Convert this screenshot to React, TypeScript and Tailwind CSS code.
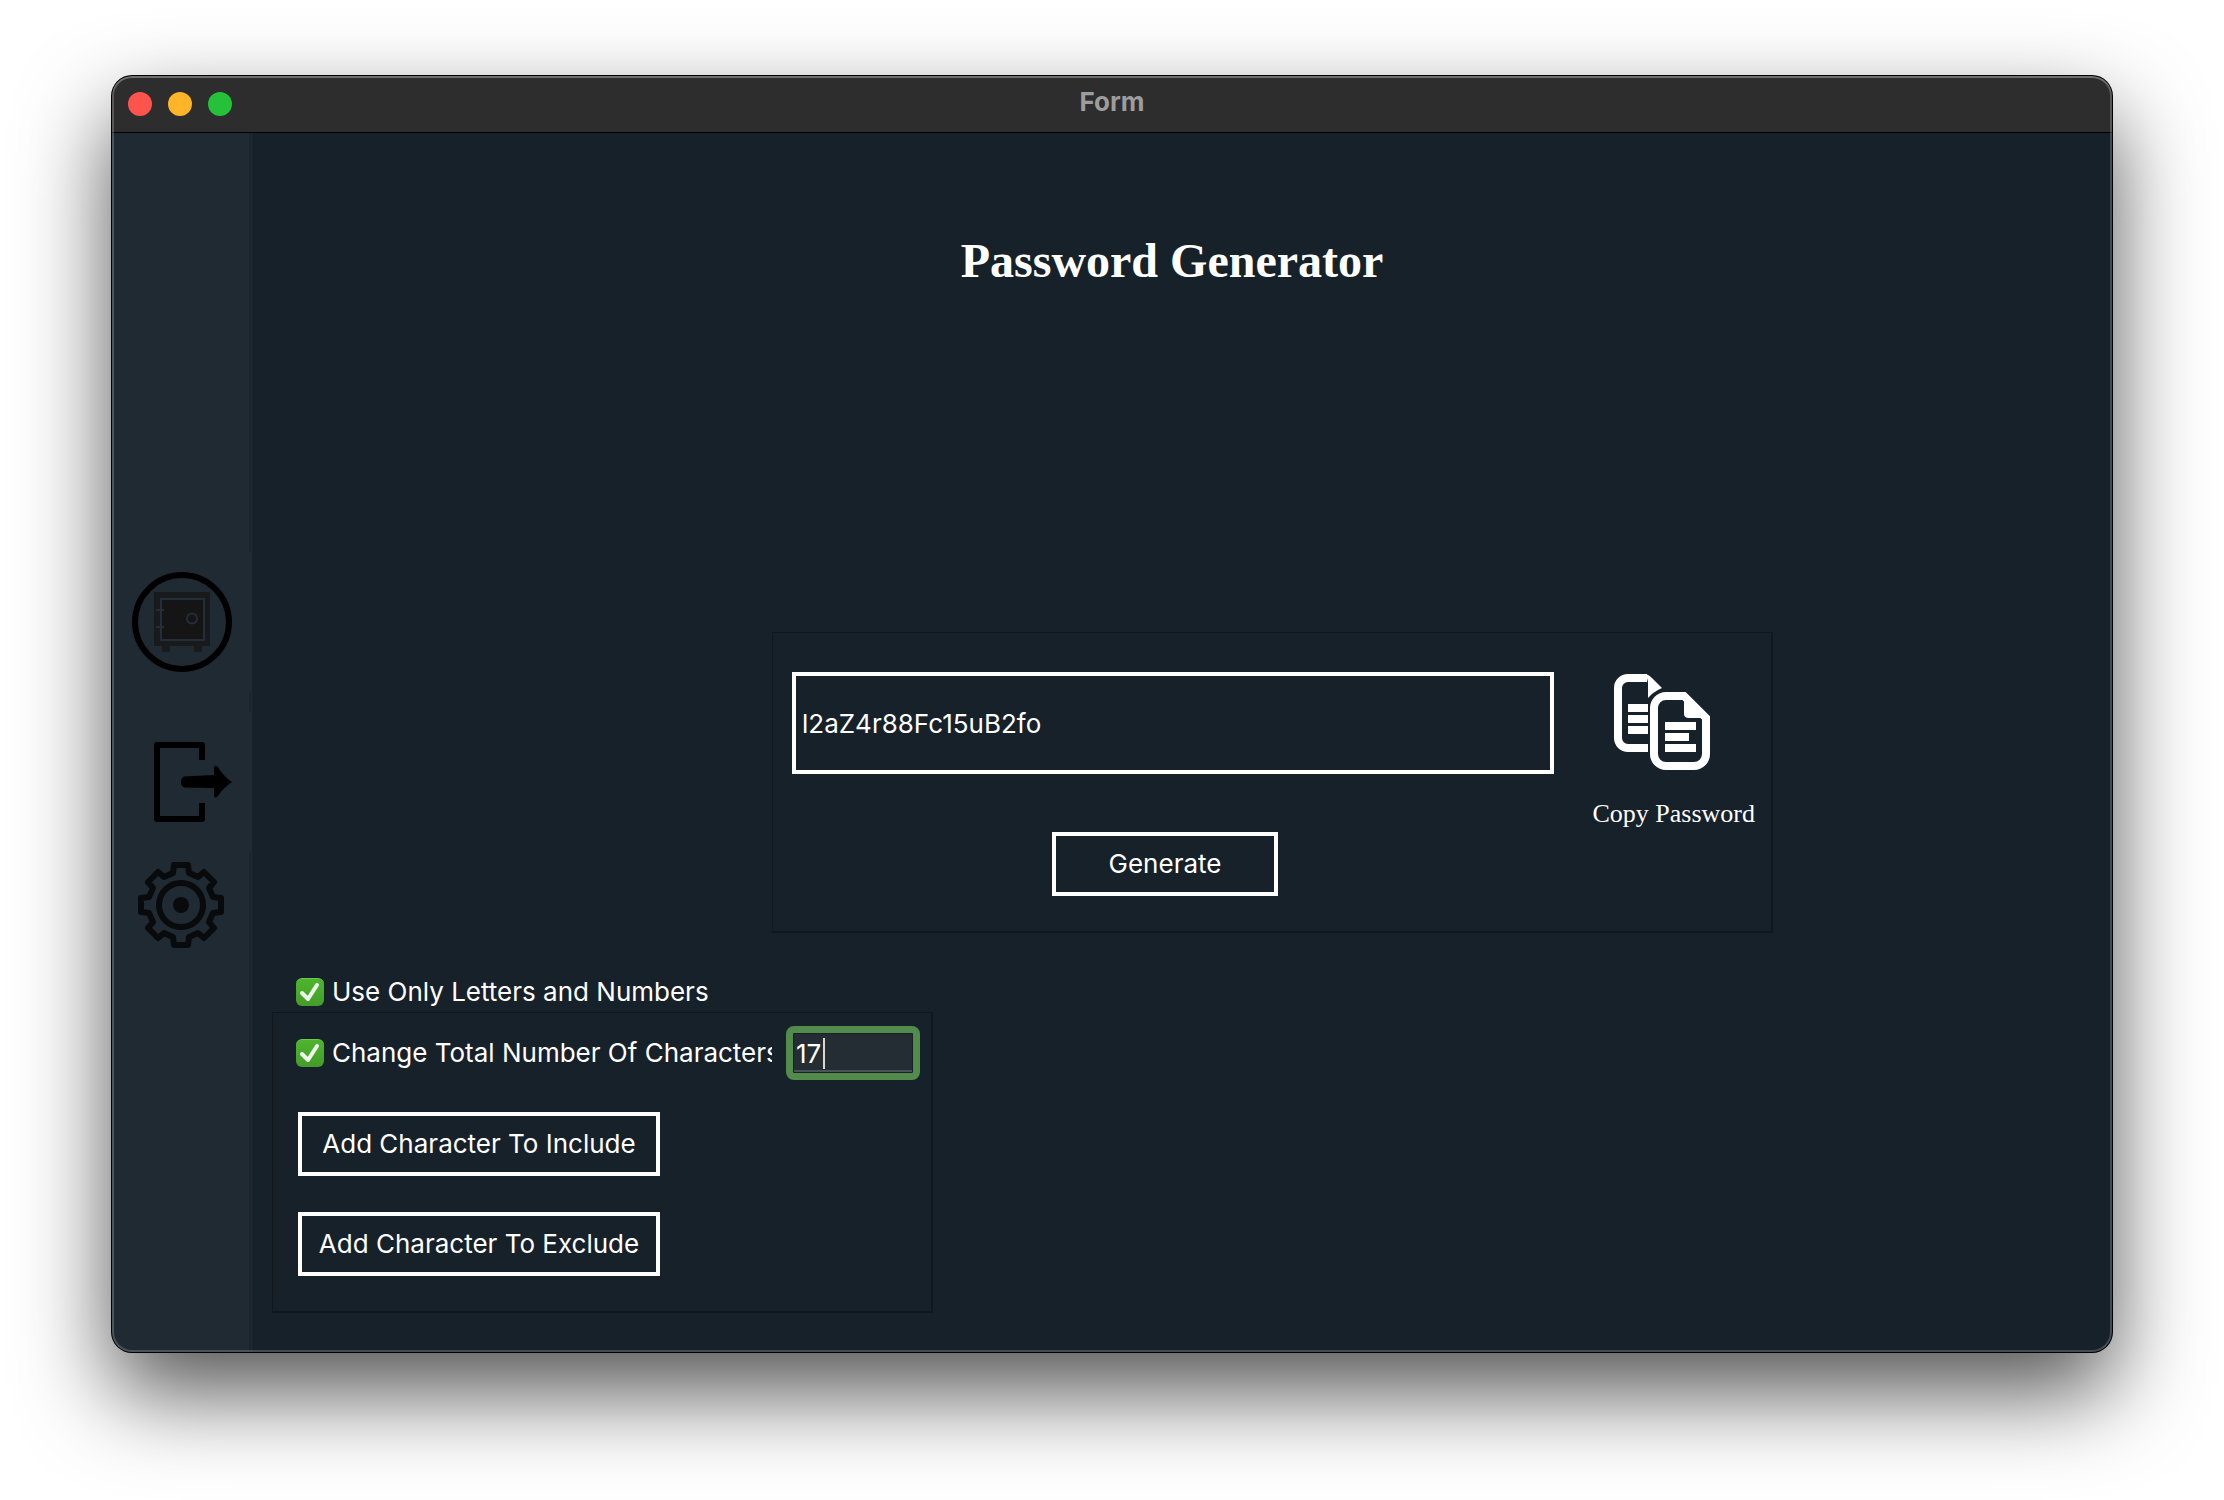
import React, { useState } from "react";

function SafeIcon() {
  return (
    <svg width="100" height="100" viewBox="0 0 100 100" aria-hidden="true">
      <circle cx="50" cy="50" r="47" fill="none" stroke="#000" strokeWidth="6" />
      <rect x="22" y="20" width="56" height="54" fill="#181a1c" />
      <rect x="30" y="73" width="8" height="7" fill="#181a1c" />
      <rect x="62" y="73" width="8" height="7" fill="#181a1c" />
      <rect x="29" y="27" width="43" height="41" fill="#151515" stroke="#242e3a" strokeWidth="2" />
      <circle cx="60" cy="46.5" r="5" fill="none" stroke="#242e3a" strokeWidth="2" />
      <path d="M24 38h8M24 55h8" stroke="#242e3a" strokeWidth="2" />
    </svg>
  );
}

function ExitIcon() {
  return (
    <svg width="78" height="80" viewBox="0 0 78 80" aria-hidden="true">
      <path d="M48 18V3H3V77H48V61" fill="none" stroke="#000" strokeWidth="6" strokeLinejoin="round" />
      <path d="M30 34.5L60 33V25Q61 23 64 25Q69 34 78 40Q69 46 64 54Q61 57 60 54V46L30 45.5Q27 44 27 40T30 34.5Z" fill="#000" />
    </svg>
  );
}

function GearIcon() {
  return (
    <svg width="86" height="86" viewBox="-43 -43 86 86" aria-hidden="true">
      <path
        d="M-7-40L7-40L8-32L17-28L23-33L33-23L28-17L32-8L40-7L40 7L32 8L28 17L33 23L23 33L17 28L8 32L7 40L-7 40L-8 32L-17 28L-23 33L-33 23L-28 17L-32 8L-40 7L-40-7L-32-8L-28-17L-33-23L-23-33L-17-28L-8-32Z"
        fill="none"
        stroke="#090a0b"
        strokeWidth="6"
        strokeLinejoin="round"
      />
      <circle r="22" fill="none" stroke="#090a0b" strokeWidth="6" />
      <circle r="8" fill="#090a0b" />
    </svg>
  );
}

function CopyIcon() {
  return (
    <svg width="96" height="96" viewBox="0 0 96 96" aria-hidden="true">
      <path d="M34 74H14A10 10 0 0 1 4 64V14A10 10 0 0 1 14 4H33" fill="none" stroke="#fff" strokeWidth="8" />
      <path d="M32 0Q35 1 38 4L48 14Q39 18 34 24V8Z" fill="#fff" />
      <path d="M14 34h20M14 45h20M14 56h20" stroke="#fff" strokeWidth="8" />
      <path
        d="M52 22H70L92 44V80A12 12 0 0 1 80 92H52A12 12 0 0 1 40 80V34A12 12 0 0 1 52 22Z"
        fill="none"
        stroke="#fff"
        strokeWidth="8"
      />
      <path d="M70 19L94 44H75Q70 44 70 40Z" fill="#fff" />
      <path d="M51 52h31M51 63h24M51 74h31" stroke="#fff" strokeWidth="8" />
    </svg>
  );
}

type OptionProps = {
  id: string;
  label: string;
  checked: boolean;
  onChange: (v: boolean) => void;
};

function Option({ id, label, checked, onChange }: OptionProps) {
  return (
    <div className="flex h-7 min-w-0 items-center gap-2">
      <span className="grid size-7 shrink-0">
        <input
          id={id}
          type="checkbox"
          checked={checked}
          onChange={(e) => onChange(e.target.checked)}
          className="col-start-1 row-start-1 size-7 appearance-none rounded-md border border-gray-500 checked:border-0 checked:border-t checked:border-[#6fc653] checked:bg-linear-to-b checked:from-[#4db52d] checked:to-[#449d29]"
        />
        {checked && (
          <svg className="pointer-events-none col-start-1 row-start-1" viewBox="0 0 28 28" aria-hidden="true">
            <path d="M6 15L12 21L21 7" fill="none" stroke="#eef8ea" strokeWidth="4" strokeLinecap="round" strokeLinejoin="round" />
          </svg>
        )}
      </span>
      <label htmlFor={id} className="overflow-hidden whitespace-nowrap">
        {label}
      </label>
    </div>
  );
}

export default function App() {
  const [password, setPassword] = useState("l2aZ4r88Fc15uB2fo");
  const [lettersOnly, setLettersOnly] = useState(true);
  const [changeTotal, setChangeTotal] = useState(true);
  const [total, setTotal] = useState("17");

  const outlined = "h-16 border-4 border-white text-center";

  return (
    <div className="flex min-h-screen bg-white px-28 pt-19 pb-37 font-['Inter',sans-serif] text-[26px] leading-8 text-white">
      <div className="relative flex flex-1 flex-col overflow-hidden rounded-[20px] bg-[#17212a] shadow-[0_0_0_1px_#000,0_40px_90px_rgba(0,0,0,0.68)]">
        <header className="grid h-[57px] grid-cols-[1fr_auto_1fr] items-center border-b border-black bg-[#2d2d2d] px-4">
          <div className="flex gap-4">
            <button aria-label="Close" className="size-6 rounded-full bg-[#ff544d]" />
            <button aria-label="Minimize" className="size-6 rounded-full bg-[#ffb429]" />
            <button aria-label="Zoom" className="size-6 rounded-full bg-[#25c138]" />
          </div>
          <span className="pb-1 font-bold text-[#9d9d9d]">Form</span>
        </header>

        <div className="flex flex-1">
          <nav className="flex w-35 shrink-0 flex-col bg-[#202a33]">
            <div className="h-[419px] w-[139px] border-r-2 border-[#1a242d]" />
            <button aria-label="Vault" className="flex h-35 items-center justify-center">
              <SafeIcon />
            </button>
            <div className="h-5 w-[139px] border-r-2 border-[#1a242d]" />
            <button aria-label="Log out" className="flex h-35 items-center justify-end pr-5">
              <ExitIcon />
            </button>
            <div className="flex w-[139px] flex-1 items-start justify-center border-r-2 border-[#1a242d] pt-[10px]">
              <button aria-label="Settings">
                <GearIcon />
              </button>
            </div>
          </nav>

          <main className="flex min-w-0 flex-1 flex-col pl-5">
            <h1 className="mt-[98px] pr-10 text-center font-['Liberation_Serif',serif] text-5xl leading-[60px] font-bold">
              Password Generator
            </h1>

            <div className="mt-[341px] grid grid-cols-[500fr_1001fr_339fr]">
              <section className="col-start-2 flex h-[301px] justify-between border-t border-r-2 border-b-2 border-l border-[#10181e] pt-[39px] pr-4 pl-[19px]">
                <div className="flex w-[762px] flex-col items-center">
                  <input
                    aria-label="Generated password"
                    value={password}
                    onChange={(e) => setPassword(e.target.value)}
                    className="h-[102px] w-full border-4 border-white bg-transparent px-1.5 outline-none"
                  />
                  <button className={outlined + " mt-[58px] mr-4 w-[226px]"}>Generate</button>
                </div>
                <button className="flex flex-col items-center self-start pt-0.5 font-['Liberation_Serif',serif] text-[26px]">
                  <span className="mr-6">
                    <CopyIcon />
                  </span>
                  <span className="mt-7">Copy Password</span>
                </button>
              </section>
            </div>

            <div className="mt-[45px] pl-6">
              <Option id="letters" label="Use Only Letters and Numbers" checked={lettersOnly} onChange={setLettersOnly} />
            </div>
            <section className="mt-1.5 flex h-[301px] w-[661px] flex-col border-t border-r-2 border-b-2 border-l border-[#10181e] pt-[13px] pr-[11px] pl-[23px]">
              <div className="flex items-center justify-between">
                <div className="w-[476px]">
                  <Option id="total" label="Change Total Number Of Characters" checked={changeTotal} onChange={setChangeTotal} />
                </div>
                <div className="relative">
                  <input
                    aria-label="Total number of characters"
                    value={total}
                    onChange={(e) => setTotal(e.target.value)}
                    className="block h-[54px] w-[134px] rounded-lg border-7 border-[#528b4c] bg-[#232d33] px-[3px] shadow-[inset_0_0_0_1px_#17212a,inset_0_-3px_0_#4a5359] outline-none"
                  />
                  <span className="pointer-events-none absolute top-3 left-[37px] h-[31px] w-0.5 bg-[#e0d6cc]" />
                </div>
              </div>
              <button className={outlined + " mt-8 ml-0.5 w-[362px]"}>Add Character To Include</button>
              <button className={outlined + " mt-9 ml-0.5 w-[362px]"}>Add Character To Exclude</button>
            </section>
          </main>
        </div>
        <div className="pointer-events-none absolute inset-0 rounded-[20px] shadow-[inset_0_0_0_2px_rgba(255,255,255,0.2),inset_0_2px_0_rgba(255,255,255,0.15)]" />
      </div>
    </div>
  );
}
